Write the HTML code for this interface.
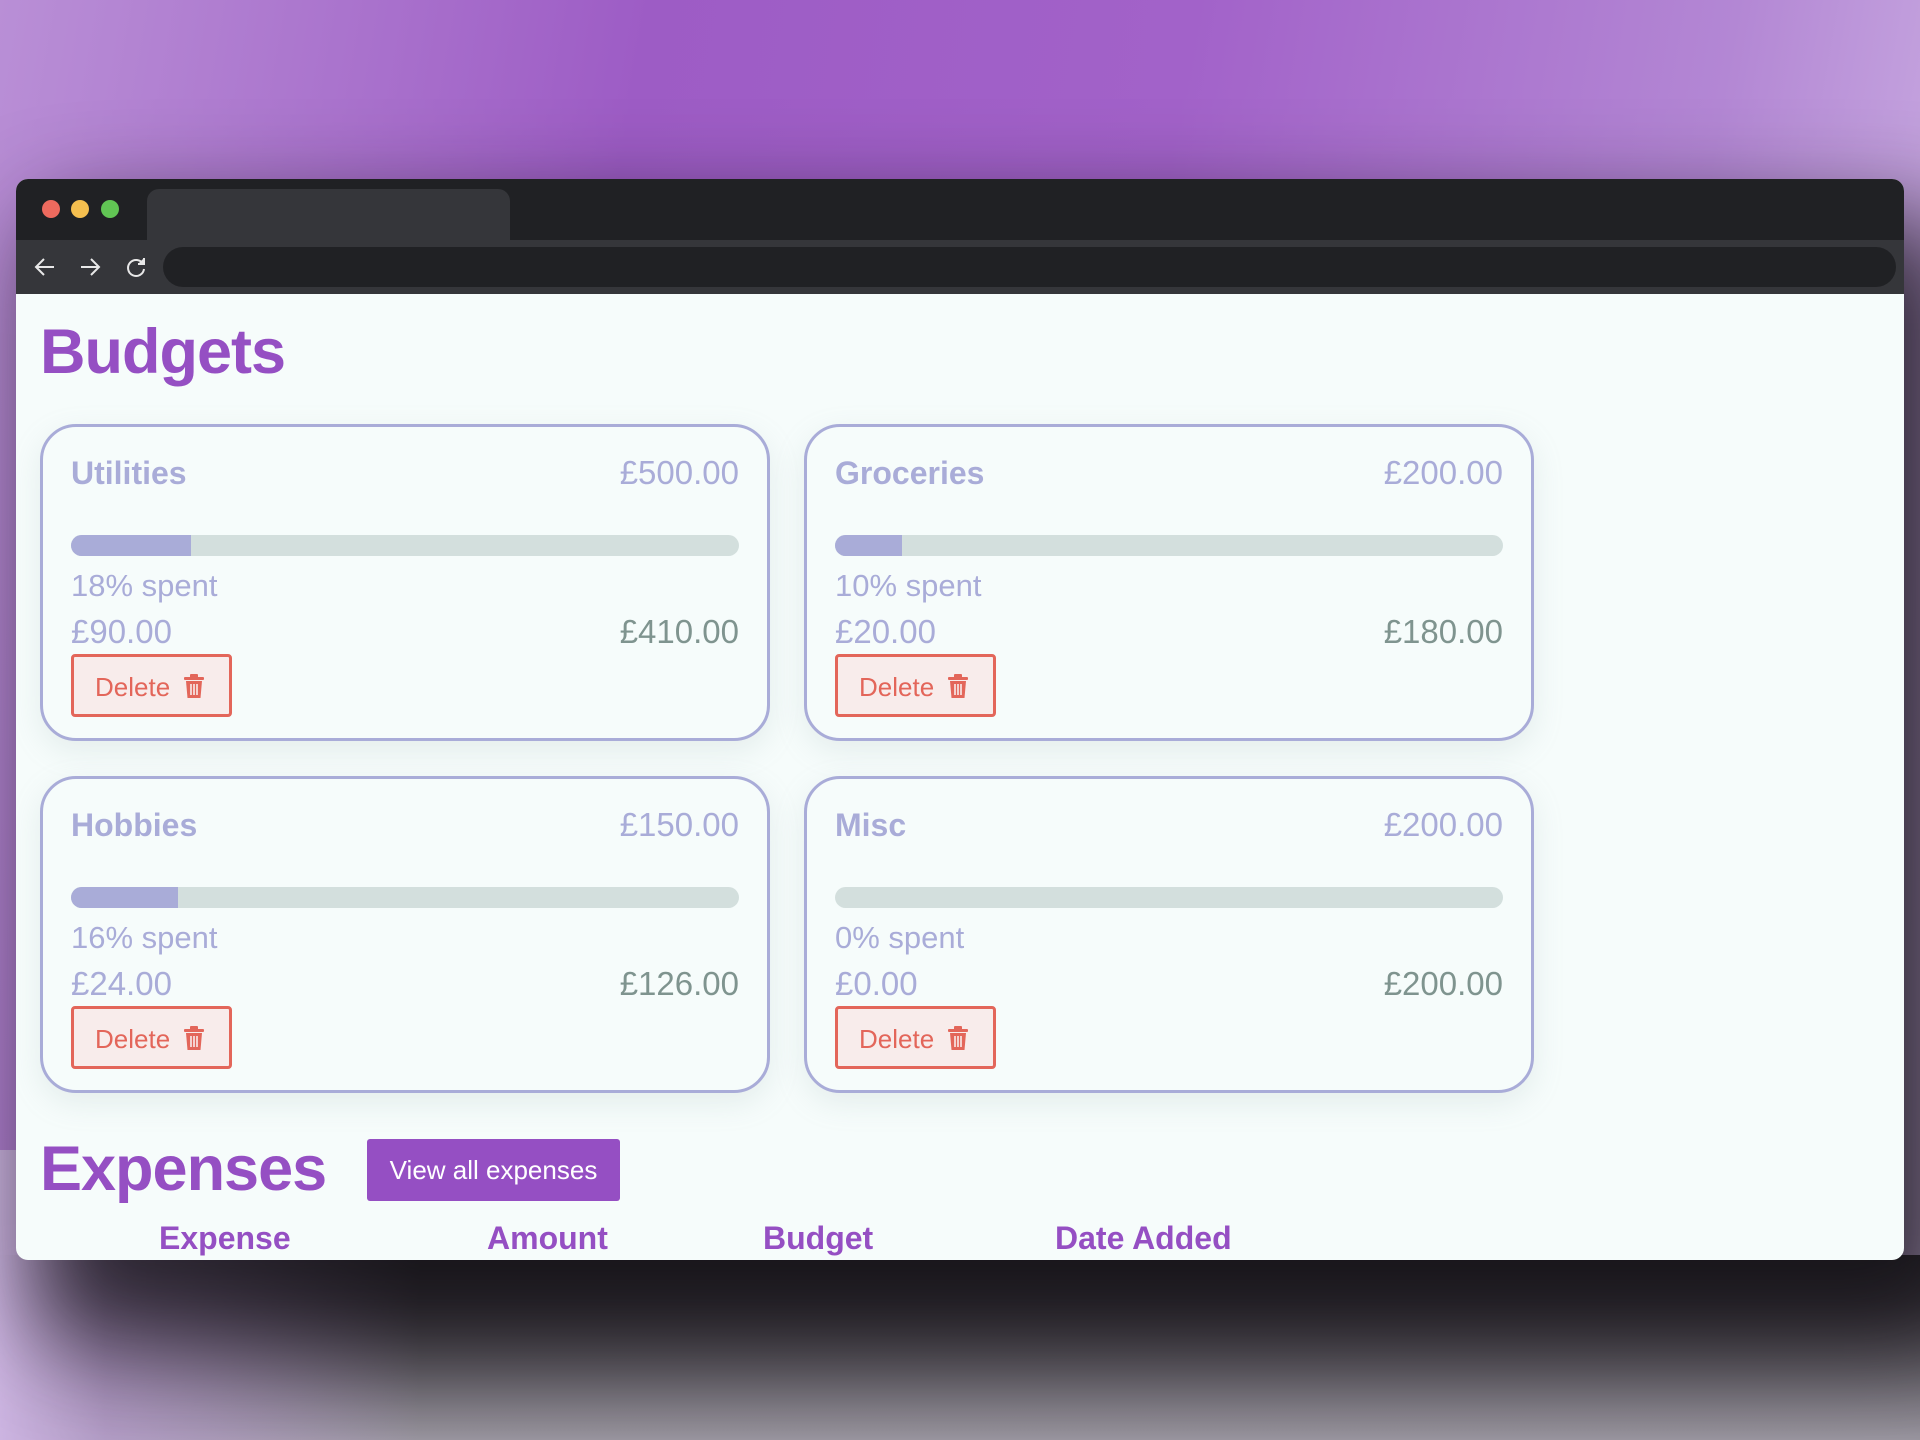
<!DOCTYPE html>
<html><head><meta charset="utf-8"><style>
*{margin:0;padding:0;box-sizing:border-box}
html,body{width:1920px;height:1440px;overflow:hidden}
body{position:relative;font-family:"Liberation Sans",sans-serif;
background:linear-gradient(100deg,#b98fd6 0%,#9d5cc5 30%,#a262c9 55%,#b387d4 80%,#d4bde8 100%);}
.bot{position:absolute;left:0;top:1255px;width:1920px;height:185px;
background:linear-gradient(180deg,#2a272d 0%,#3d3840 25%,#6c6870 65%,#9a96a0 100%);}
.botl{position:absolute;left:0;top:1150px;width:420px;height:290px;
background:linear-gradient(90deg,#cdb5e2 0%,rgba(190,160,215,.7) 25%,rgba(150,120,170,0) 100%);}
.win{position:absolute;left:16px;top:179px;width:1888px;height:1081px;border-radius:12px;overflow:hidden;background:#f6fcfb;
box-shadow:40px 60px 100px 20px rgba(20,18,22,.8)}
.tabbar{position:absolute;left:0;top:0;width:100%;height:61px;background:#202124}
.dot{position:absolute;top:21px;width:18px;height:18px;border-radius:50%}
.tab{position:absolute;left:131px;top:10px;width:363px;height:51px;background:#35363a;border-radius:12px 12px 0 0}
.tool{position:absolute;left:0;top:61px;width:100%;height:54px;background:#35363a}
.addr{position:absolute;left:147px;top:7px;right:8px;height:40px;background:#202124;border-radius:20px}
.content{position:absolute;left:0;top:115px;width:100%;bottom:0}
h1{position:absolute;left:24px;font-size:63px;font-weight:bold;color:#954fc3;letter-spacing:-1px}
.card{position:absolute;width:730px;height:317px;border:3px solid #a9acd8;border-radius:36px;background:#f6fcfb;box-shadow:0 10px 30px rgba(150,170,170,.18)}
.card .t{position:absolute;left:28px;top:28px;font-size:32px;font-weight:bold;color:#a9acd8}
.card .a{position:absolute;right:28px;top:27px;font-size:33px;color:#a9acd8}
.bar{position:absolute;left:28px;right:28px;top:108px;height:21px;border-radius:11px;background:#d3dfdd;overflow:hidden}
.bar i{display:block;height:100%;background:#a9acd8}
.sp{position:absolute;left:28px;top:141px;font-size:31px;color:#a9acd8}
.l{position:absolute;left:28px;top:186px;font-size:33px;color:#a9acd8}
.r{position:absolute;right:28px;top:186px;font-size:33px;color:#7f948f}
.del{position:absolute;left:28px;top:227px;width:161px;height:63px;border:3px solid #e3665a;border-radius:4px;background:#f8eceb;color:#e3665a;font-size:26px}
.del span{position:absolute;left:21px;top:15px}
.del svg{position:absolute;left:110px;top:17px}
.btn{position:absolute;left:351px;top:845px;width:253px;height:62px;background:#954fc3;border-radius:3px;color:#fff;font-size:26px;text-align:center;line-height:62px}
.th{position:absolute;top:1041px;font-size:32px;font-weight:bold;color:#954fc3}
</style></head><body>
<div class="bot"></div><div class="botl"></div>
<div class="win">
 <div class="tabbar">
  <div class="dot" style="left:26px;background:#ed6a5e"></div>
  <div class="dot" style="left:55px;background:#f5bf4f"></div>
  <div class="dot" style="left:85px;background:#61c554"></div>
  <div class="tab"></div>
 </div>
 <div class="tool">
  <svg style="position:absolute;left:18px;top:16px" width="22" height="22" viewBox="0 0 22 22" fill="none" stroke="#e8e8e8" stroke-width="2"><path d="M20 11H3M10 3L2 11l8 8"/></svg>
  <svg style="position:absolute;left:63px;top:16px" width="22" height="22" viewBox="0 0 22 22" fill="none" stroke="#e8e8e8" stroke-width="2"><path d="M2 11h17M12 3l8 8-8 8"/></svg>
  <svg style="position:absolute;left:109px;top:16px" width="22" height="22" viewBox="0 0 22 22" fill="none" stroke="#e8e8e8" stroke-width="2"><path d="M18 8A8 8 0 1 0 19 13"/><path d="M19 2v6h-6" fill="#e8e8e8"/></svg>
  <div class="addr"></div>
 </div>
 <div class="content">
  <h1 style="top:22px">Budgets</h1>
  <div class="card" style="left:24px;top:130px"><div class="t">Utilities</div><div class="a">£500.00</div><div class="bar"><i style="width:18%"></i></div><div class="sp">18% spent</div><div class="l">£90.00</div><div class="r">£410.00</div><div class="del"><span>Delete</span><svg width="20" height="24" viewBox="0 0 20 24" fill="#e3665a"><rect x="0" y="3" width="20" height="3" rx="1"/><rect x="6" y="0" width="8" height="4" rx="1"/><path d="M2 7h16l-1.5 17h-13z"/><path d="M7 10v11M10 10v11M13 10v11" stroke="#f8eceb" stroke-width="1.6"/></svg></div></div>
  <div class="card" style="left:788px;top:130px"><div class="t">Groceries</div><div class="a">£200.00</div><div class="bar"><i style="width:10%"></i></div><div class="sp">10% spent</div><div class="l">£20.00</div><div class="r">£180.00</div><div class="del"><span>Delete</span><svg width="20" height="24" viewBox="0 0 20 24" fill="#e3665a"><rect x="0" y="3" width="20" height="3" rx="1"/><rect x="6" y="0" width="8" height="4" rx="1"/><path d="M2 7h16l-1.5 17h-13z"/><path d="M7 10v11M10 10v11M13 10v11" stroke="#f8eceb" stroke-width="1.6"/></svg></div></div>
  <div class="card" style="left:24px;top:482px"><div class="t">Hobbies</div><div class="a">£150.00</div><div class="bar"><i style="width:16%"></i></div><div class="sp">16% spent</div><div class="l">£24.00</div><div class="r">£126.00</div><div class="del"><span>Delete</span><svg width="20" height="24" viewBox="0 0 20 24" fill="#e3665a"><rect x="0" y="3" width="20" height="3" rx="1"/><rect x="6" y="0" width="8" height="4" rx="1"/><path d="M2 7h16l-1.5 17h-13z"/><path d="M7 10v11M10 10v11M13 10v11" stroke="#f8eceb" stroke-width="1.6"/></svg></div></div>
  <div class="card" style="left:788px;top:482px"><div class="t">Misc</div><div class="a">£200.00</div><div class="bar"><i style="width:0%"></i></div><div class="sp">0% spent</div><div class="l">£0.00</div><div class="r">£200.00</div><div class="del"><span>Delete</span><svg width="20" height="24" viewBox="0 0 20 24" fill="#e3665a"><rect x="0" y="3" width="20" height="3" rx="1"/><rect x="6" y="0" width="8" height="4" rx="1"/><path d="M2 7h16l-1.5 17h-13z"/><path d="M7 10v11M10 10v11M13 10v11" stroke="#f8eceb" stroke-width="1.6"/></svg></div></div>
  <h1 style="top:839px">Expenses</h1>
  <div class="btn">View all expenses</div>
 </div>
 <div class="th" style="left:143px">Expense</div>
 <div class="th" style="left:471px">Amount</div>
 <div class="th" style="left:747px">Budget</div>
 <div class="th" style="left:1039px">Date Added</div>
</div>
</body></html>
